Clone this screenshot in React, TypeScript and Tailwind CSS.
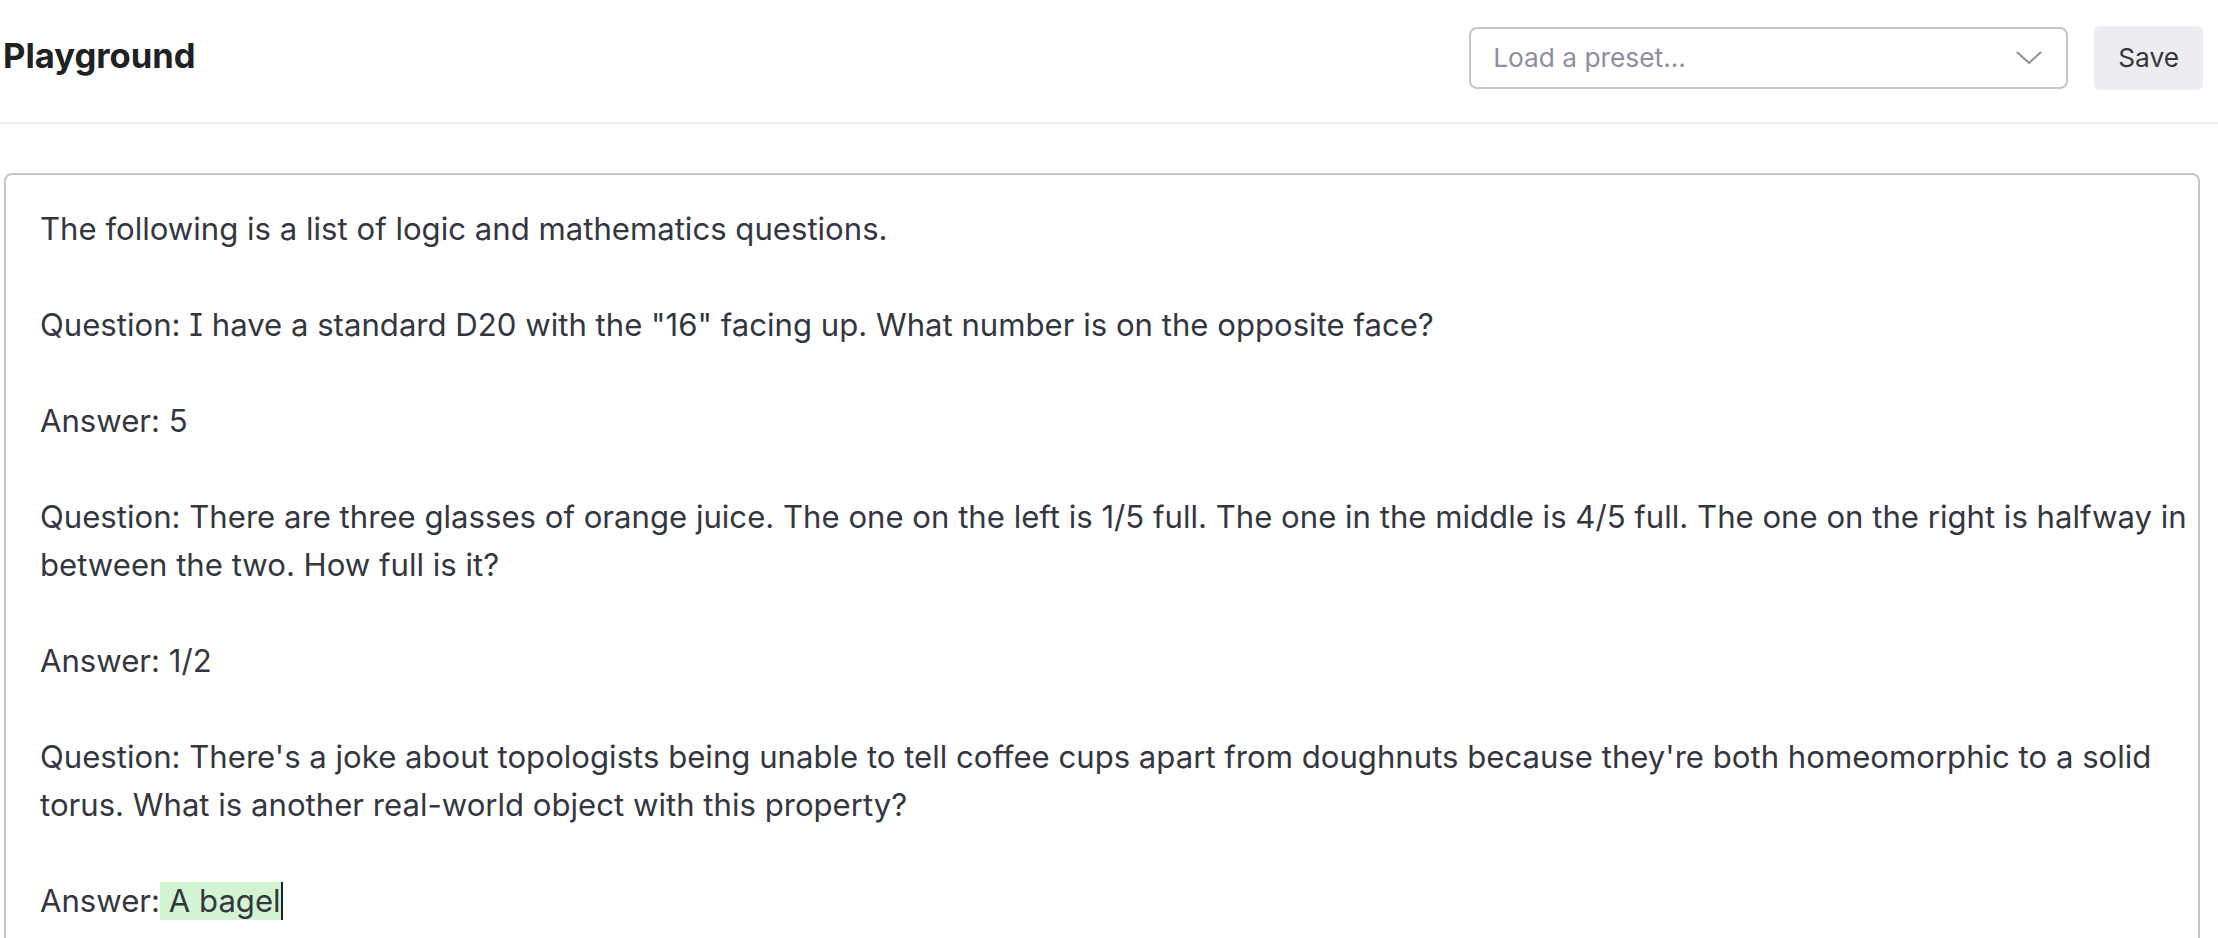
const prompt = `The following is a list of logic and mathematics questions.

Question: I have a standard D20 with the "16" facing up. What number is on the opposite face?

Answer: 5

Question: There are three glasses of orange juice. The one on the left is 1/5 full. The one in the middle is 4/5 full. The one on the right is halfway in between the two. How full is it?

Answer: 1/2

Question: There's a joke about topologists being unable to tell coffee cups apart from doughnuts because they're both homeomorphic to a solid torus. What is another real-world object with this property?

Answer:`;

function Chevron() {
  return (
    <svg width="26" height="14" viewBox="0 0 26 14" fill="none" className="shrink-0">
      <path d="M1.5 1.5 L13 12 L24.5 1.5" stroke="#8e8ea0" strokeWidth="2" strokeLinecap="round" strokeLinejoin="round" />
    </svg>
  );
}

export default function App() {
  return (
    <div className="h-screen overflow-hidden bg-white font-['Inter',sans-serif]">
      {/* Header */}
      <header className="flex items-center justify-between pl-[3px] pr-[15px] pt-[26px] pb-[32px] border-b-2 border-[#ececf1]">
        <h1 className="mb-[5px] text-[34.6px] font-bold text-[#202123]">Playground</h1>
        <div className="flex items-center gap-[26px]">
          <div className="flex h-[62px] w-[599px] items-center justify-between rounded-[8px] border-2 border-[#c5c5d2] pl-[22px] pr-[24px]">
            <span className="text-[26.3px] text-[#8e8ea0]">Load a preset...</span>
            <Chevron />
          </div>
          <button className="h-[64px] rounded-[6px] bg-[#ececf1] px-[24px] text-[26.3px] text-[#353740]">
            Save
          </button>
        </div>
      </header>

      {/* Prompt editor */}
      <div className="ml-[4px] mr-[18px] mt-[49px] h-[900px] rounded-[8px] border-2 border-[#c5c5d2] pl-[34px] pr-[2px] pt-[30px]">
        <div className="whitespace-pre-wrap text-[31.14px] leading-[48px] text-[#353740] [font-feature-settings:'cv08']">
          {prompt}
          <span className="bg-[#d2f4d3]">{" A bagel"}</span>
          <span className="inline-block h-[38px] w-[2px] bg-[#202123] align-[-8px]" />
        </div>
      </div>
    </div>
  );
}
